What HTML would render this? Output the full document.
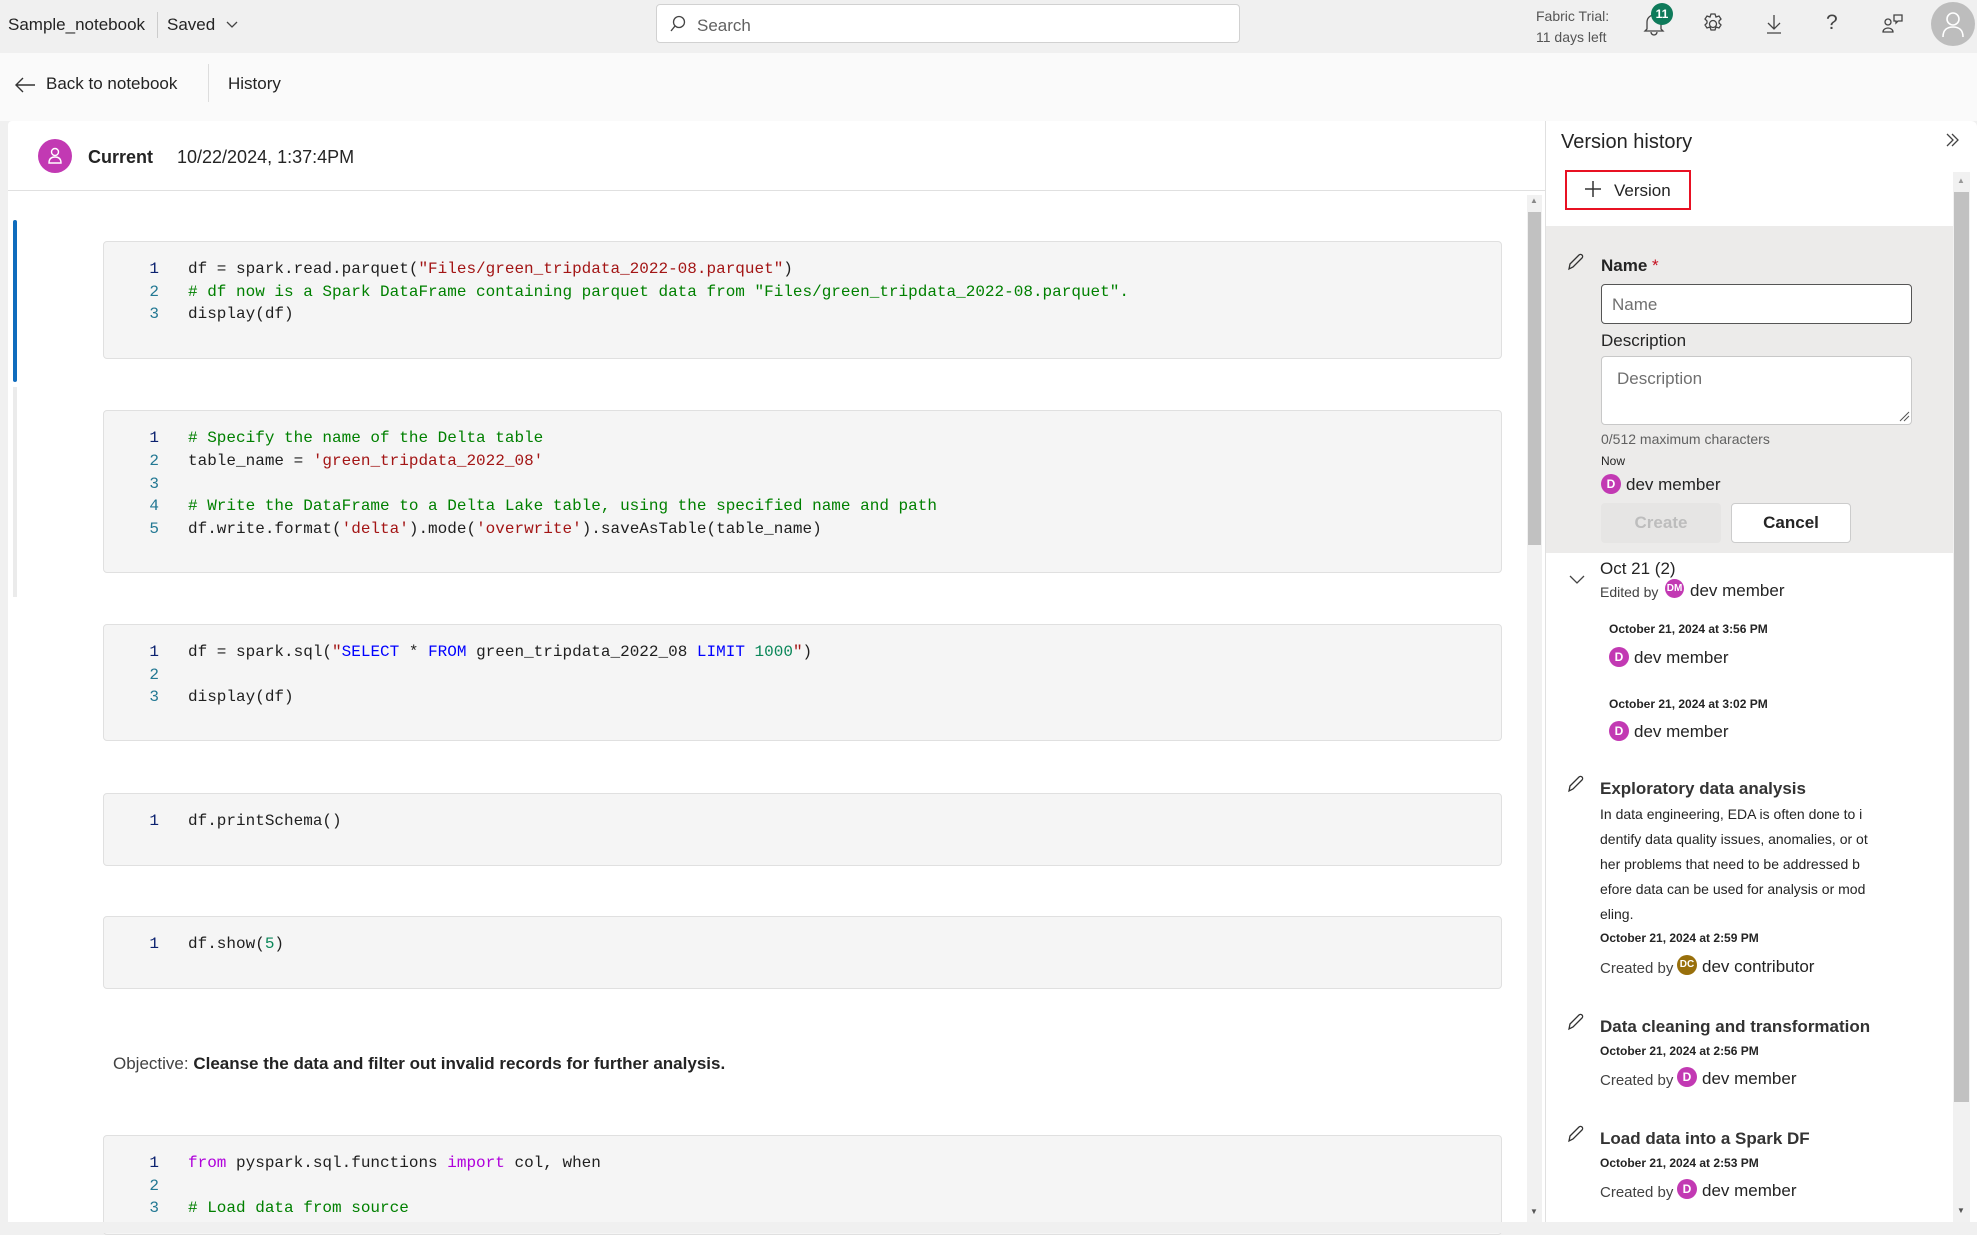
<!DOCTYPE html>
<html><head><meta charset="utf-8"><style>
*{margin:0;padding:0;box-sizing:border-box}
body{width:1977px;height:1233px;background:#f0f0f0;font-family:"Liberation Sans",sans-serif;color:#242424;position:relative;overflow:hidden}
.a{position:absolute;white-space:nowrap}
.mono{font-family:"Liberation Mono",monospace;font-size:16px}
.cell{position:absolute;left:103px;width:1399px;background:#f5f5f5;border:1px solid #e0e0e0;border-radius:4px}
.ln{position:absolute;left:40px;width:15px;text-align:right;color:#237893;top:1px}
.ln1{color:#0b216f}
.cd{position:absolute;left:84px;color:#1f1f1f}
.s{color:#a31515}.c{color:#008000}.k{color:#0000ff}.n{color:#098658}.p{color:#af00db}.b{color:#1f1f1f}
.av{position:absolute;border-radius:50%;color:#fff;font-size:12px;font-weight:bold;text-align:center}
.dt{font-size:12px;font-weight:bold;color:#242424}
</style></head><body>
<div class="a" style="left:0;top:0;width:1977px;height:53px;background:#f0f0f0"></div>
<div class="a" style="left:8px;top:15px;font-size:17px">Sample_notebook</div>
<div class="a" style="left:157px;top:12px;width:1px;height:26px;background:#ccc"></div>
<div class="a" style="left:167px;top:15px;font-size:17px">Saved</div>
<svg class="a" style="left:226px;top:20px" width="12" height="10"><path d="M1 2l5 5 5-5" stroke="#444" fill="none" stroke-width="1.3"/></svg>
<div class="a" style="left:656px;top:4px;width:584px;height:39px;background:#fff;border:1px solid #d1d1d1;border-radius:4px"></div>
<svg class="a" style="left:669px;top:15px" width="18" height="18"><circle cx="10" cy="7" r="5.5" stroke="#444" fill="none" stroke-width="1.3"/><path d="M6 11l-4 5" stroke="#444" stroke-width="1.4"/></svg>
<div class="a" style="left:697px;top:16px;font-size:17px;color:#616161">Search</div>
<div class="a" style="left:1536px;top:6px;font-size:14px;color:#555;line-height:21px">Fabric Trial:<br>11 days left</div>
<svg class="a" style="left:1642px;top:12px" width="24" height="24"><path d="M5 17V10a7 7 0 0 1 14 0v7l2 2H3z M9 20a3 3 0 0 0 6 0" stroke="#444" fill="none" stroke-width="1.3"/></svg>
<div class="a" style="left:1651px;top:3px;width:22px;height:22px;border-radius:50%;background:#0e7a5a;color:#fff;font-size:12px;font-weight:bold;text-align:center;line-height:22px">11</div>
<svg class="a" style="left:1701px;top:12px" width="24" height="24"><circle cx="12" cy="12" r="3.5" stroke="#444" fill="none" stroke-width="1.3"/><path d="M10 2h4l1 3 3-1 2 3-2 2 0 2 2 2-2 3-3-1-1 3h-4l-1-3-3 1-2-3 2-2v-2l-2-2 2-3 3 1z" stroke="#444" fill="none" stroke-width="1.3"/></svg>
<svg class="a" style="left:1762px;top:12px" width="24" height="24"><path d="M12 3v14M6 11l6 6 6-6M5 21h14" stroke="#444" fill="none" stroke-width="1.3"/></svg>
<div class="a" style="left:1826px;top:11px;font-size:21px;color:#444">?</div>
<svg class="a" style="left:1881px;top:12px" width="24" height="24"><circle cx="7" cy="10" r="3" stroke="#444" fill="none" stroke-width="1.3"/><path d="M2 20a5 4 0 0 1 10 0z M13 3h8v6h-4l-2 2v-2h-2z" stroke="#444" fill="none" stroke-width="1.3"/></svg>
<div class="a" style="left:1931px;top:2px;width:44px;height:44px;border-radius:50%;background:#bdbdbd"></div>
<svg class="a" style="left:1941px;top:10px" width="24" height="28"><circle cx="12" cy="9" r="6" stroke="#fff" fill="none" stroke-width="1.6"/><path d="M2 27c0-7 4-10 10-10s10 3 10 10" stroke="#fff" fill="none" stroke-width="1.6"/></svg>
<div class="a" style="left:0;top:53px;width:1977px;height:68px;background:#fafafa"></div>
<svg class="a" style="left:14px;top:76px" width="22" height="18"><path d="M21 9H2M9 2L2 9l7 7" stroke="#333" fill="none" stroke-width="1.4"/></svg>
<div class="a" style="left:46px;top:74px;font-size:17px">Back to notebook</div>
<div class="a" style="left:208px;top:64px;width:1px;height:38px;background:#ddd"></div>
<div class="a" style="left:228px;top:74px;font-size:17px">History</div>
<div class="a" style="left:8px;top:121px;width:1537px;height:1101px;background:#fff;border-radius:4px 0 0 0"></div>
<div class="a" style="left:38px;top:139px;width:34px;height:34px;border-radius:50%;background:#c239b3"></div>
<svg class="a" style="left:47px;top:146px" width="16" height="20"><circle cx="8" cy="6" r="3.5" stroke="#fff" fill="none" stroke-width="1.4"/><path d="M2 17c0-4 2-6 6-6s6 2 6 6z" stroke="#fff" fill="none" stroke-width="1.4"/></svg>
<div class="a" style="left:88px;top:147px;font-size:18px;font-weight:bold">Current</div>
<div class="a" style="left:177px;top:147px;font-size:18px">10/22/2024, 1:37:4PM</div>
<div class="a" style="left:8px;top:190px;width:1537px;height:1px;background:#e0e0e0"></div>
<div class="a" style="left:13px;top:220px;width:4px;height:162px;background:#0f6cbd;border-radius:2px"></div>
<div class="a" style="left:13px;top:387px;width:4px;height:210px;background:#ebebeb"></div>
<div class="a" style="left:1527px;top:195px;width:15px;height:1027px;background:#f1f1f1"></div>
<div class="a" style="left:1528px;top:212px;width:13px;height:333px;background:#c1c1c1"></div>
<div class="a" style="left:1530px;top:196px;font-size:8px;color:#888">▲</div>
<div class="a" style="left:1530px;top:1207px;font-size:8px;color:#555">▼</div>

<div class="cell mono" style="top:241px;height:118px">
<div class="ln ln1" style="top:18px">1</div><div class="cd" style="top:18px">df = spark.read.parquet(<span class="s">"Files/green_tripdata_2022-08.parquet"</span>)</div>
<div class="ln" style="top:41px">2</div><div class="cd c" style="top:41px"># df now is a Spark DataFrame containing parquet data from "Files/green_tripdata_2022-08.parquet".</div>
<div class="ln" style="top:63px">3</div><div class="cd" style="top:63px">display(df)</div>
</div>
<div class="cell mono" style="top:410px;height:163px">
<div class="ln ln1" style="top:18px">1</div><div class="cd c" style="top:18px"># Specify the name of the Delta table</div>
<div class="ln" style="top:41px">2</div><div class="cd" style="top:41px">table_name = <span class="s">'green_tripdata_2022_08'</span></div>
<div class="ln" style="top:64px">3</div>
<div class="ln" style="top:86px">4</div><div class="cd c" style="top:86px"># Write the DataFrame to a Delta Lake table, using the specified name and path</div>
<div class="ln" style="top:109px">5</div><div class="cd" style="top:109px">df.write.format(<span class="s">'delta'</span>).mode(<span class="s">'overwrite'</span>).saveAsTable(table_name)</div>
</div>
<div class="cell mono" style="top:624px;height:117px">
<div class="ln ln1" style="top:18px">1</div><div class="cd" style="top:18px">df = spark.sql(<span class="s">"</span><span class="k">SELECT</span> * <span class="k">FROM</span> green_tripdata_2022_08 <span class="k">LIMIT</span> <span class="n">1000</span><span class="s">"</span>)</div>
<div class="ln" style="top:41px">2</div>
<div class="ln" style="top:63px">3</div><div class="cd" style="top:63px">display(df)</div>
</div>
<div class="cell mono" style="top:793px;height:73px">
<div class="ln ln1" style="top:18px">1</div><div class="cd" style="top:18px">df.printSchema()</div>
</div>
<div class="cell mono" style="top:916px;height:73px">
<div class="ln ln1" style="top:18px">1</div><div class="cd" style="top:18px">df.show(<span class="n">5</span>)</div>
</div>
<div class="a" style="left:113px;top:1054px;font-size:17px;color:#424242">Objective: <b style="color:#242424">Cleanse the data and filter out invalid records for further analysis.</b></div>
<div class="cell mono" style="top:1135px;height:100px">
<div class="ln ln1" style="top:18px">1</div><div class="cd" style="top:18px"><span class="p">from</span> pyspark.sql.functions <span class="p">import</span> col, when</div>
<div class="ln" style="top:41px">2</div>
<div class="ln" style="top:63px">3</div><div class="cd c" style="top:63px"># Load data from source</div>
</div>
<div class="a" style="left:0;top:1222px;width:1977px;height:11px;background:#f0f0f0"></div>

<div class="a" style="left:1545px;top:121px;width:432px;height:1101px;background:#fff;border-left:1px solid #e0e0e0;border-radius:0 6px 0 0"></div>
<div class="a" style="left:1561px;top:131px;font-size:20px">Version history</div>
<svg class="a" style="left:1944px;top:132px" width="16" height="16"><path d="M3 2l6 6-6 6M8 2l6 6-6 6" stroke="#444" fill="none" stroke-width="1.3"/></svg>
<div class="a" style="left:1565px;top:170px;width:126px;height:40px;border:2px solid #e81123"></div>
<svg class="a" style="left:1584px;top:180px" width="18" height="18"><path d="M9 1v16M1 9h16" stroke="#333" stroke-width="1.5"/></svg>
<div class="a" style="left:1614px;top:181px;font-size:17px">Version</div>
<div class="a" style="left:1953px;top:172px;width:17px;height:1050px;background:#f1f1f1"></div>
<div class="a" style="left:1954px;top:192px;width:15px;height:910px;background:#c1c1c1"></div>
<div class="a" style="left:1957px;top:176px;font-size:8px;color:#999">▲</div>
<div class="a" style="left:1957px;top:1206px;font-size:8px;color:#555">▼</div>

<div class="a" style="left:1546px;top:226px;width:407px;height:327px;background:#ecebea"></div>
<svg class="a" style="left:1566px;top:252px" width="20" height="20"><path d="M3 17l1-5 9-9a2 2 0 0 1 3 3l-9 9z" stroke="#333" fill="none" stroke-width="1.3"/></svg>
<div class="a" style="left:1601px;top:256px;font-size:17px;font-weight:bold">Name <span style="color:#c50f1f;font-weight:normal">*</span></div>
<div class="a" style="left:1601px;top:284px;width:311px;height:40px;background:#fff;border:1px solid #555;border-radius:4px"></div>
<div class="a" style="left:1612px;top:295px;font-size:17px;color:#707070">Name</div>
<div class="a" style="left:1601px;top:331px;font-size:17px">Description</div>
<div class="a" style="left:1601px;top:356px;width:311px;height:69px;background:#fff;border:1px solid #c8c8c8;border-radius:4px"></div>
<div class="a" style="left:1617px;top:369px;font-size:17px;color:#707070">Description</div>
<svg class="a" style="left:1898px;top:410px" width="12" height="12"><path d="M2 11l9-9M6 11l5-5" stroke="#555" stroke-width="1"/></svg>
<div class="a" style="left:1601px;top:431px;font-size:14px;color:#616161">0/512 maximum characters</div>
<div class="a" style="left:1601px;top:454px;font-size:12px">Now</div>
<div class="av" style="left:1601px;top:474px;width:20px;height:20px;line-height:20px;background:#c239b3">D</div>
<div class="a" style="left:1626px;top:475px;font-size:17px">dev member</div>
<div class="a" style="left:1601px;top:503px;width:120px;height:40px;background:#e6e5e4;border-radius:4px;color:#bdbdbd;font-size:17px;font-weight:bold;text-align:center;line-height:40px">Create</div>
<div class="a" style="left:1731px;top:503px;width:120px;height:40px;background:#fff;border:1px solid #ccc;border-radius:4px;font-size:17px;font-weight:bold;text-align:center;line-height:38px">Cancel</div>

<svg class="a" style="left:1569px;top:574px" width="16" height="12"><path d="M1 2l7 7 7-7" stroke="#444" fill="none" stroke-width="1.3"/></svg>
<div class="a" style="left:1600px;top:559px;font-size:17px">Oct 21 (2)</div>
<div class="a" style="left:1600px;top:584px;font-size:14px;color:#424242">Edited by</div>
<div class="av" style="left:1665px;top:579px;width:19px;height:19px;line-height:19px;font-size:10px;background:#c239b3">DM</div>
<div class="a" style="left:1690px;top:581px;font-size:17px">dev member</div>
<div class="a dt" style="left:1609px;top:622px">October 21, 2024 at 3:56 PM</div>
<div class="av" style="left:1609px;top:647px;width:20px;height:20px;line-height:20px;background:#c239b3">D</div>
<div class="a" style="left:1634px;top:648px;font-size:17px">dev member</div>
<div class="a dt" style="left:1609px;top:697px">October 21, 2024 at 3:02 PM</div>
<div class="av" style="left:1609px;top:721px;width:20px;height:20px;line-height:20px;background:#c239b3">D</div>
<div class="a" style="left:1634px;top:722px;font-size:17px">dev member</div>

<svg class="a" style="left:1566px;top:774px" width="20" height="20"><path d="M3 17l1-5 9-9a2 2 0 0 1 3 3l-9 9z" stroke="#333" fill="none" stroke-width="1.3"/></svg>
<div class="a" style="left:1600px;top:779px;font-size:17px;font-weight:bold;color:#333">Exploratory data analysis</div>
<div class="a" style="left:1600px;top:802px;font-size:14px;line-height:25px;color:#242424">In data engineering, EDA is often done to i<br>dentify data quality issues, anomalies, or ot<br>her problems that need to be addressed b<br>efore data can be used for analysis or mod<br>eling.</div>
<div class="a dt" style="left:1600px;top:931px">October 21, 2024 at 2:59 PM</div>
<div class="a" style="left:1600px;top:960px;font-size:15px;color:#424242">Created by</div>
<div class="av" style="left:1677px;top:955px;width:20px;height:20px;line-height:20px;font-size:10px;background:#986f0b">DC</div>
<div class="a" style="left:1702px;top:957px;font-size:17px">dev contributor</div>

<svg class="a" style="left:1566px;top:1012px" width="20" height="20"><path d="M3 17l1-5 9-9a2 2 0 0 1 3 3l-9 9z" stroke="#333" fill="none" stroke-width="1.3"/></svg>
<div class="a" style="left:1600px;top:1017px;font-size:17px;font-weight:bold;color:#333">Data cleaning and transformation</div>
<div class="a dt" style="left:1600px;top:1044px">October 21, 2024 at 2:56 PM</div>
<div class="a" style="left:1600px;top:1072px;font-size:15px;color:#424242">Created by</div>
<div class="av" style="left:1677px;top:1067px;width:20px;height:20px;line-height:20px;background:#c239b3">D</div>
<div class="a" style="left:1702px;top:1069px;font-size:17px">dev member</div>

<svg class="a" style="left:1566px;top:1124px" width="20" height="20"><path d="M3 17l1-5 9-9a2 2 0 0 1 3 3l-9 9z" stroke="#333" fill="none" stroke-width="1.3"/></svg>
<div class="a" style="left:1600px;top:1129px;font-size:17px;font-weight:bold;color:#333">Load data into a Spark DF</div>
<div class="a dt" style="left:1600px;top:1156px">October 21, 2024 at 2:53 PM</div>
<div class="a" style="left:1600px;top:1184px;font-size:15px;color:#424242">Created by</div>
<div class="av" style="left:1677px;top:1179px;width:20px;height:20px;line-height:20px;background:#c239b3">D</div>
<div class="a" style="left:1702px;top:1181px;font-size:17px">dev member</div>
<div class="a" style="left:0;top:1222px;width:1977px;height:11px;background:#f0f0f0"></div>
</body></html>
